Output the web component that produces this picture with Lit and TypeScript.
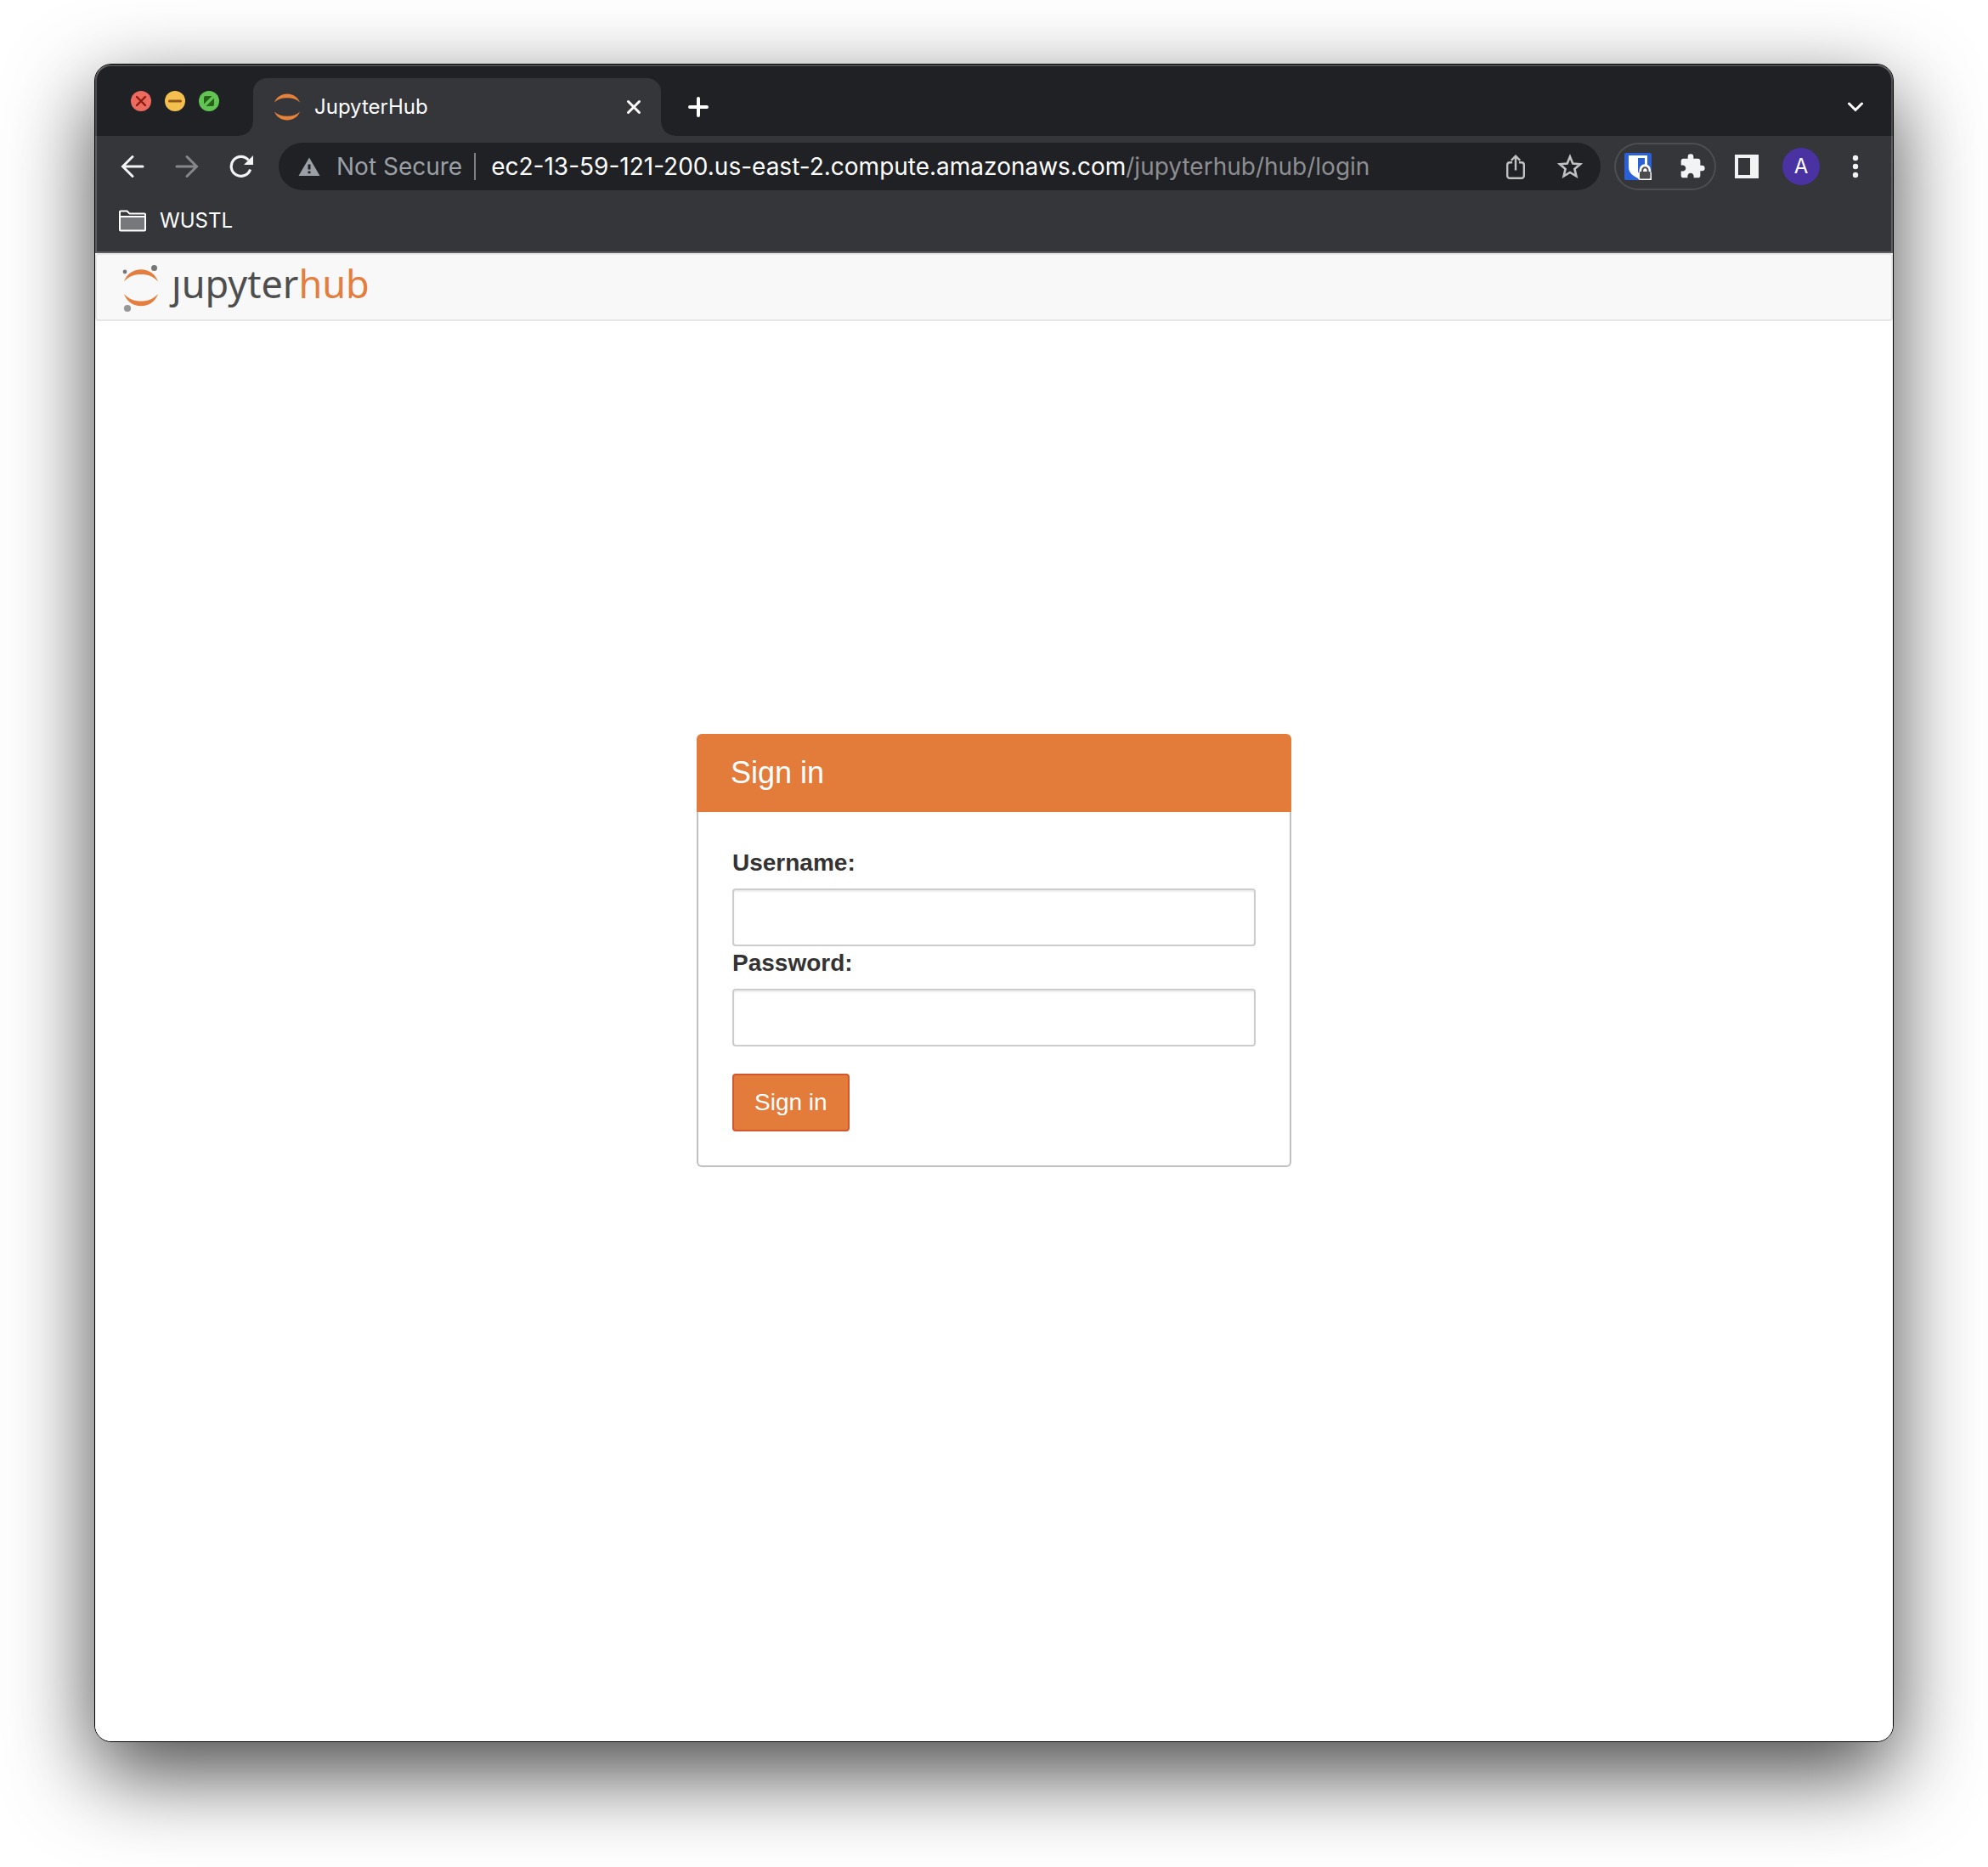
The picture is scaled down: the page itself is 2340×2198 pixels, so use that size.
import { LitElement, html, css, svg } from "lit";
import { customElement, property } from "lit/decorators.js";

const ORANGE_ARCS = svg`
  <path d="M1 10.5C3.500 4.300 9.300 0.500 16 0.500S28.500 4.300 31 10.500C27.500 7 22.300 5.200 16 5.200S4.500 7 1 10.500Z" />
  <path d="M1 21.500C3.500 27.700 9.300 31.500 16 31.500S28.500 27.700 31 21.500C27.500 25 22.300 26.800 16 26.800S4.500 25 1 21.500Z" />
`;

/* Window title area: traffic lights, the open tab, new-tab and tab-search buttons. */
@customElement("tab-strip")
export class TabStrip extends LitElement {
  @property() label = "";

  static styles = css`
    :host {
      display: flex;
      align-items: flex-end;
      height: 84px;
      padding: 0 16px 0 42px;
      box-sizing: border-box;
      background: #202124;
      color: #fff;
    }
    button {
      border: 0;
      padding: 0;
      background: none;
      color: inherit;
      display: flex;
      align-items: center;
      justify-content: center;
    }
    svg { display: block; }
    .lights {
      display: flex;
      gap: 16px;
      align-self: flex-start;
      padding-top: 31px;
      margin-right: 40px;
    }
    .light { width: 24px; height: 24px; border-radius: 50%; }
    .red { background: #ec6a5e; }
    .yellow { background: #f4bf4f; }
    .green { background: #61c554; }
    .tab {
      position: relative;
      display: flex;
      align-items: center;
      flex: 0 1 480px;
      height: 68px;
      padding: 0 16px 0 24px;
      box-sizing: border-box;
      gap: 16px;
      border-radius: 16px 16px 0 0;
      background: #35363a;
      font-size: 24px;
      line-height: 32px;
    }
    .tab::before,
    .tab::after {
      content: "";
      position: absolute;
      bottom: 0;
      width: 16px;
      height: 16px;
    }
    .tab::before {
      right: 100%;
      background: radial-gradient(circle at 0 0, transparent 15px, #35363a 16px);
    }
    .tab::after {
      left: 100%;
      background: radial-gradient(circle at 100% 0, transparent 15px, #35363a 16px);
    }
    .title { flex: 1; }
    .close { width: 32px; height: 32px; }
    .tool { width: 56px; height: 68px; }
    .new { margin-left: 16px; }
    .search { margin-left: auto; }
  `;

  render() {
    return html`
      <div class="lights">
        <button class="light red" aria-label="Close window">
          <svg width="24" height="24" viewBox="0 0 24 24" fill="none" stroke="#8c1a10" stroke-width="2.400" stroke-linecap="round">
            <path d="M7 7l10 10M17 7L7 17" />
          </svg>
        </button>
        <button class="light yellow" aria-label="Minimize window">
          <svg width="24" height="24" viewBox="0 0 24 24" stroke="#8f591d" stroke-width="3" stroke-linecap="round">
            <path d="M5.500 12h13" />
          </svg>
        </button>
        <button class="light green" aria-label="Zoom window">
          <svg width="24" height="24" viewBox="0 0 24 24" fill="#286017">
            <path d="M6 15.500V8a2 2 0 0 1 2-2h7.500zM18 8.500V16a2 2 0 0 1-2 2H8.500z" />
          </svg>
        </button>
      </div>
      <div class="tab">
        <svg width="32" height="32" viewBox="0 0 32 32" fill="#e8823a">${ORANGE_ARCS}</svg>
        <span class="title">${this.label}</span>
        <button class="close" aria-label="Close tab">
          <svg width="18" height="18" viewBox="0 0 18 18" stroke="currentColor" stroke-width="3" stroke-linecap="round">
            <path d="M2.500 2.500l13 13M15.500 2.500l-13 13" />
          </svg>
        </button>
      </div>
      <button class="tool new" aria-label="New tab">
        <svg width="24" height="24" viewBox="0 0 24 24" stroke="currentColor" stroke-width="4" stroke-linecap="round">
          <path d="M12 2v20M2 12h20" />
        </svg>
      </button>
      <button class="tool search" aria-label="Search tabs">
        <svg width="20" height="12" viewBox="0 0 20 12" fill="none" stroke="currentColor" stroke-width="3" stroke-linecap="round">
          <path d="M2.500 2l7.500 7.500L17.500 2" />
        </svg>
      </button>
    `;
  }
}

/* Navigation buttons, address field, extensions and profile. */
@customElement("address-bar")
export class AddressBar extends LitElement {
  @property() origin = "";
  @property() path = "";

  static styles = css`
    :host {
      display: flex;
      align-items: center;
      gap: 8px;
      padding: 8px 16px;
      color: #f1f3f4;
    }
    button {
      border: 0;
      padding: 0;
      background: none;
      color: inherit;
      font: inherit;
      width: 56px;
      height: 56px;
      flex: none;
      display: flex;
      align-items: center;
      justify-content: center;
    }
    svg { display: block; flex: none; }
    .muted { color: #86878a; }
    .field {
      display: flex;
      align-items: center;
      flex: 1;
      min-width: 0;
      height: 56px;
      margin: 0 8px;
      padding: 0 8px 0 22px;
      box-sizing: border-box;
      border-radius: 28px;
      background: #202124;
      font-size: 28px;
      line-height: 32px;
    }
    .security {
      width: auto;
      gap: 18px;
      color: #9aa0a6;
    }
    .rule {
      width: 2px;
      height: 32px;
      margin: 0 18px 0 14px;
      background: #808185;
    }
    .url { display: flex; flex: 1; min-width: 0; color: #fff; }
    .path {
      flex: 1;
      min-width: 0;
      border: 0;
      padding: 0;
      outline: 0;
      background: none;
      color: #8d8e91;
      font: inherit;
    }
    .tools { display: flex; gap: 8px; color: #c0c1c2; }
    .extensions {
      display: flex;
      gap: 8px;
      border-radius: 28px;
      box-shadow: inset 0 0 0 2px #4d4e52;
    }
    .avatar {
      width: 44px;
      height: 44px;
      margin: 0 6px;
      border-radius: 50%;
      background: #4a32a3;
      color: #fff;
      font-size: 24px;
      line-height: 32px;
    }
  `;

  render() {
    return html`
      <button aria-label="Back">
        <svg width="28" height="28" viewBox="0 0 28 28" fill="none" stroke="currentColor" stroke-width="3" stroke-linecap="round">
          <path d="M26 14H3M14 2.500L2.500 14 14 25.500" />
        </svg>
      </button>
      <button class="muted" aria-label="Forward">
        <svg width="28" height="28" viewBox="0 0 28 28" fill="none" stroke="currentColor" stroke-width="3" stroke-linecap="round">
          <path d="M2 14h23M14 2.500L25.500 14 14 25.500" />
        </svg>
      </button>
      <button aria-label="Reload">
        <svg width="28" height="28" viewBox="0 0 28 28" fill="none" stroke="currentColor" stroke-width="3.200">
          <path d="M24.600 17.500A11.500 11.500 0 1 1 22.500 6.500" />
          <path d="M28 1v11H17z" fill="currentColor" stroke="none" />
        </svg>
      </button>
      <div class="field">
        <button class="security">
          <svg width="28" height="28" viewBox="0 0 28 28" fill="currentColor" fill-rule="evenodd">
            <path d="M14 3.500L26.500 25h-25zM12.500 11.500v6h3v-6zM12.500 19.500v2.700h3v-2.700z" />
          </svg>
          Not Secure
        </button>
        <span class="rule"></span>
        <label class="url">
          <span>${this.origin}</span>
          <input class="path" type="text" aria-label="Address" .value=${this.path} />
        </label>
        <div class="tools">
          <button aria-label="Share">
            <svg width="28" height="32" viewBox="0 0 28 32" fill="none" stroke="currentColor" stroke-width="2.400">
              <path d="M10 11.200H7A3 3 0 0 0 4.200 14v13A2.800 2.800 0 0 0 7 29.800h14a2.800 2.800 0 0 0 2.800-2.800V14A2.800 2.800 0 0 0 21 11.200h-3" />
              <path d="M14 20.500V4.500M8.800 8.800L14 3.600l5.200 5.200" />
            </svg>
          </button>
          <button aria-label="Bookmark this page">
            <svg width="32" height="32" viewBox="0 0 32 32" fill="none" stroke="currentColor" stroke-width="2.600">
              <path d="M16 4.500l3.300 8 8.700.7-6.600 5.700 2 8.500L16 22.900l-7.400 4.500 2-8.500L4 13.200l8.700-.7z" />
            </svg>
          </button>
        </div>
      </div>
      <div class="extensions">
        <button aria-label="Bitwarden">
          <svg width="32" height="32" viewBox="0 0 32 32">
            <rect width="32" height="32" rx="2" fill="#2b60d6" />
            <path d="M5 3h22v14c0 6-5 9.800-11 13C10 27 5 23 5 17z" fill="#fff" />
            <path d="M16 6h8v11c0 4-4 7-8 9z" fill="#2b60d6" />
            <path d="M16 24.500a3 3 0 0 1 1.500-2.500V20a6.800 6.800 0 0 1 13.600 0v2a3 3 0 0 1 .9 2V32H19a3 3 0 0 1-3-3z" fill="#fff" />
            <path d="M21.200 22.500V20.500a3.200 3.200 0 0 1 6.400 0v2" fill="none" stroke="#4c4c4c" stroke-width="2" />
            <rect x="18" y="22" width="12.500" height="8.500" rx="1" fill="#4c4c4c" />
          </svg>
        </button>
        <button aria-label="Extensions">
          <svg width="32" height="32" viewBox="0 0 24 24" fill="currentColor">
            <path d="M20.500 11H19V7c0-1.100-.9-2-2-2h-4V3.500a2.500 2.500 0 0 0-5 0V5H4c-1.100 0-1.990.9-1.990 2v3.800H3.500c1.490 0 2.700 1.210 2.700 2.700s-1.210 2.700-2.700 2.700H2V20c0 1.100.9 2 2 2h3.800v-1.500c0-1.490 1.210-2.700 2.700-2.700s2.700 1.210 2.700 2.700V22H17c1.100 0 2-.9 2-2v-4h1.500a2.500 2.500 0 0 0 0-5z" />
          </svg>
        </button>
      </div>
      <button aria-label="Side panel">
        <svg width="28" height="28" viewBox="0 0 28 28" fill="currentColor" fill-rule="evenodd">
          <path d="M0 0h28v28H0zM4 4v20h14V4z" />
        </svg>
      </button>
      <button class="avatar">A</button>
      <button aria-label="Menu">
        <svg width="28" height="28" viewBox="0 0 28 28" fill="currentColor">
          <circle cx="14" cy="4" r="3.200" /><circle cx="14" cy="14" r="3.200" /><circle cx="14" cy="24" r="3.200" />
        </svg>
      </button>
    `;
  }
}

/* The JupyterHub sign-in page shown inside the window. */
@customElement("login-page")
export class LoginPage extends LitElement {
  static styles = css`
    :host {
      display: flex;
      flex-direction: column;
      background: #fff;
      color: #333;
      font-family: "Liberation Sans", Arial, sans-serif;
      font-size: 28px;
      line-height: 40px;
    }
    .navbar {
      flex: none;
      display: flex;
      align-items: center;
      height: 80px;
      padding: 0 28px;
      box-sizing: border-box;
      border: 2px solid #e7e7e7;
      border-radius: 4px;
      background: #f8f8f8;
    }
    .brand {
      display: flex;
      align-items: center;
      gap: 16px;
      color: #4e4e4e;
      font-family: "Noto Sans", sans-serif;
      font-size: 45px;
      line-height: 60px;
      text-decoration: none;
    }
    .brand svg { display: block; }
    .wordmark { padding-bottom: 8px; }
    .dotless { display: inline-block; clip-path: inset(22px 0 0 -10px); }
    .hub { color: #e37e3e; }
    main {
      flex: 0 0 80%;
      display: flex;
      align-items: center;
      justify-content: center;
      margin-top: 40px;
    }
    form {
      width: 700px;
      max-width: 100%;
      display: flex;
      flex-direction: column;
    }
    h1 {
      margin: 0;
      padding: 26px 40px;
      border-radius: 6px 6px 0 0;
      background: #e37b3b;
      color: #fff;
      font-size: 36px;
      font-weight: 400;
      line-height: 40px;
    }
    .body {
      display: flex;
      flex-direction: column;
      padding: 40px;
      border: 2px solid #c0c0c0;
      border-top: 0;
      border-radius: 0 0 6px 6px;
    }
    label { font-weight: 700; margin-bottom: 10px; }
    input {
      height: 68px;
      padding: 12px 24px;
      box-sizing: border-box;
      border: 2px solid #ccc;
      border-radius: 4px;
      background: #fff;
      box-shadow: inset 0 2px 2px rgba(0, 0, 0, 0.075);
      color: #555;
      font: inherit;
    }
    .submit {
      align-self: flex-start;
      margin-top: 32px;
      padding: 12px 24px;
      border: 2px solid #d3562c;
      border-radius: 4px;
      background: #e37b3b;
      color: #fff;
      font: inherit;
    }
  `;

  render() {
    return html`
      <nav class="navbar">
        <a class="brand" href="#" aria-label="jupyterhub">
          <svg width="44" height="60" viewBox="0 -2 44 60">
            <g fill="#e37e3e">
              <path d="M4 21.500C7 12.500 15 7.200 24 7.200S41 12.500 44 21.500C39 15.500 32 13 24 13S9 15.500 4 21.500Z" />
              <path d="M4 36C7 45 15 50.300 24 50.300S41 45 44 36C39 42 32 44.500 24 44.500S9 42 4 36Z" />
            </g>
            <circle cx="5" cy="10" r="2.400" fill="#767677" />
            <circle cx="39.500" cy="5.500" r="3.500" fill="#767677" />
            <circle cx="8" cy="53" r="4.100" fill="#989798" />
          </svg>
          <span class="wordmark"><span class="dotless">j</span>upyter<span class="hub">hub</span></span>
        </a>
      </nav>
      <main>
        <form @submit=${(e: Event) => e.preventDefault()}>
          <h1>Sign in</h1>
          <div class="body">
            <label for="username">Username:</label>
            <input id="username" type="text" autocomplete="off" />
            <label for="password">Password:</label>
            <input id="password" type="password" autocomplete="off" />
            <button class="submit" type="submit">Sign in</button>
          </div>
        </form>
      </main>
    `;
  }
}

@customElement("app-root")
export class AppRoot extends LitElement {
  static styles = css`
    :host {
      display: flex;
      height: 100vh;
      padding: 75px 111px 147px;
      box-sizing: border-box;
      overflow: hidden;
      background: #fff;
      font-family: Inter, Roboto, sans-serif;
    }
    .window {
      flex: 1;
      min-width: 0;
      display: flex;
      flex-direction: column;
      overflow: hidden;
      border: 1px solid #000;
      border-radius: 20px;
      background: #fff;
      box-shadow: 0 36px 100px rgba(0, 0, 0, 0.72);
    }
    .chrome {
      position: relative;
      flex: none;
      border-bottom: 2px solid #5f5e62;
      background: #35363a;
    }
    .chrome::after {
      content: "";
      position: absolute;
      inset: 0;
      border-radius: 19px 19px 0 0;
      box-shadow: inset 0 2px rgba(255, 255, 255, 0.2), inset 2px 0 rgba(255, 255, 255, 0.2),
        inset -2px 0 rgba(255, 255, 255, 0.2);
      pointer-events: none;
    }
    .bookmarks {
      display: flex;
      height: 64px;
      padding: 0 28px 8px;
      box-sizing: border-box;
      color: #fff;
      font-size: 24px;
      line-height: 32px;
    }
    .bookmark {
      display: flex;
      align-items: center;
      gap: 16px;
      border: 0;
      padding: 0;
      background: none;
      color: inherit;
      font: inherit;
    }
    .page { flex: 1; min-height: 0; }
  `;

  render() {
    return html`
      <div class="window">
        <div class="chrome">
          <tab-strip label="JupyterHub"></tab-strip>
          <address-bar
            origin="ec2-13-59-121-200.us-east-2.compute.amazonaws.com"
            path="/jupyterhub/hub/login"
          ></address-bar>
          <div class="bookmarks">
            <button class="bookmark">
              <svg width="32" height="26" viewBox="0 0 32 26" fill="none" stroke="currentColor" stroke-width="2">
                <path d="M1 8h30v15.500a1 1 0 0 1-1 1H2a1 1 0 0 1-1-1z" fill="#77787b" />
                <path d="M1 8V2.500a1 1 0 0 1 1-1h7.500l3 3H30a1 1 0 0 1 1 1V8" />
              </svg>
              WUSTL
            </button>
          </div>
        </div>
        <login-page class="page"></login-page>
      </div>
    `;
  }
}
